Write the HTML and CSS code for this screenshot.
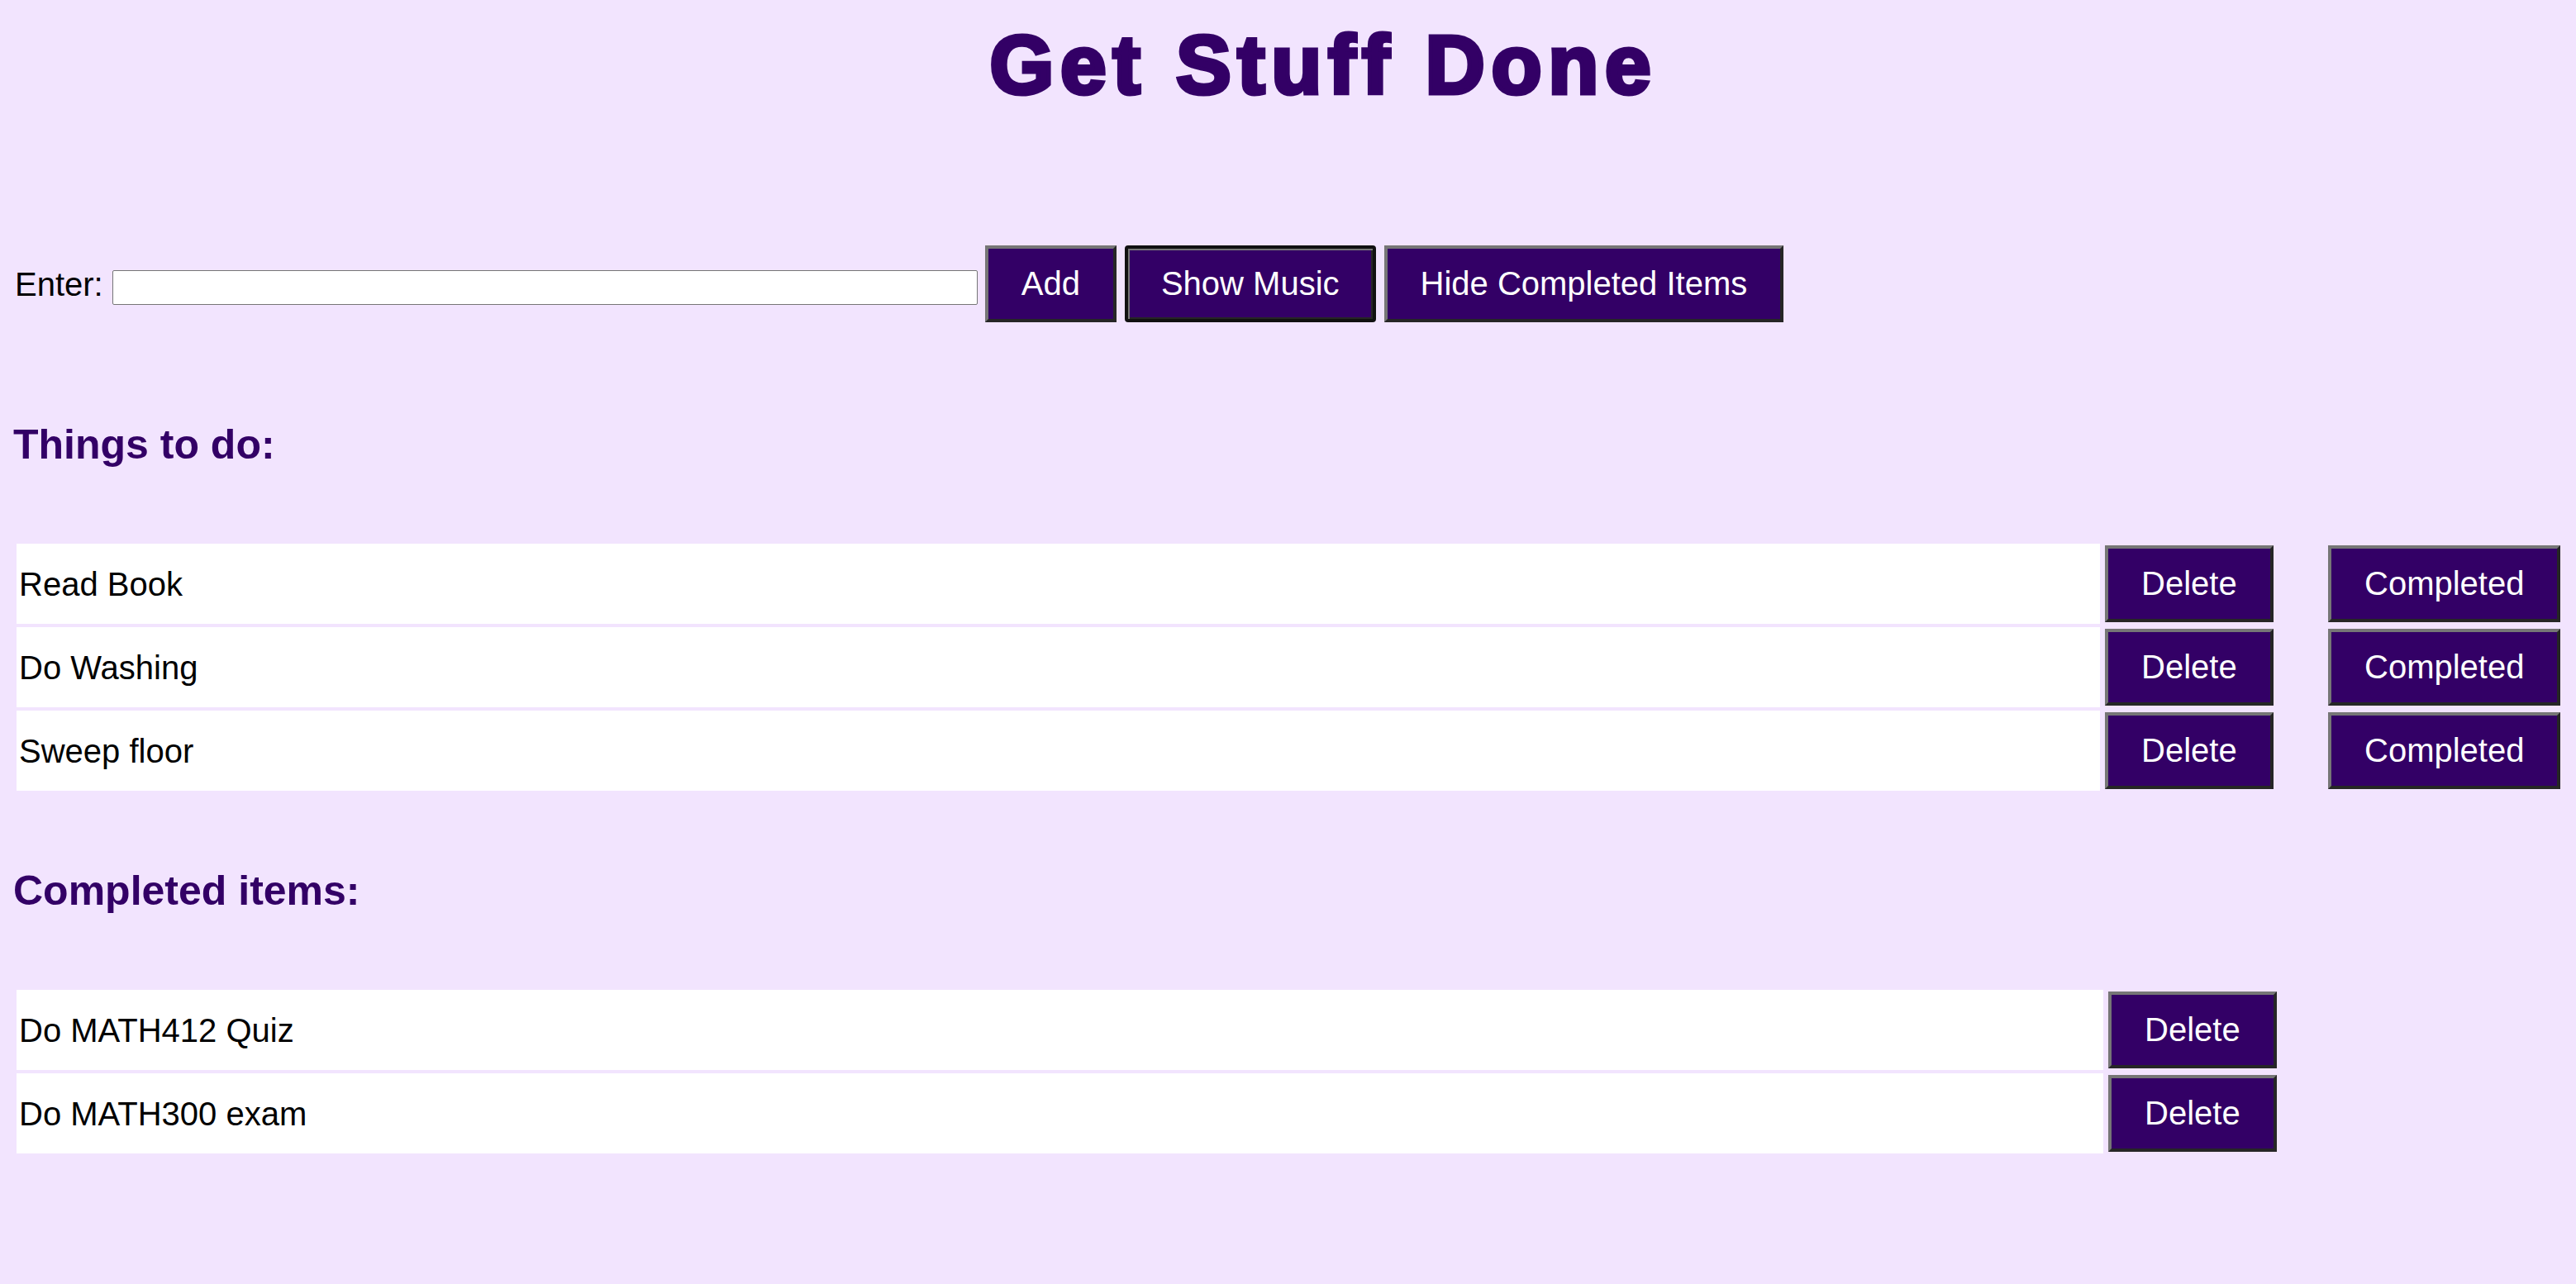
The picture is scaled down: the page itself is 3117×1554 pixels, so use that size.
FILE: index.html
```html
<!DOCTYPE html>
<html lang="en">
<head>
<meta charset="utf-8">
<title>Get Stuff Done</title>
<link rel="stylesheet" href="styles.css">
</head>
<body class="page">
  <header class="masthead">
    <h1 class="title">Get Stuff Done</h1>
  </header>

  <form class="entry-bar">
    <label class="entry-label" for="entry">Enter:</label>
    <input class="entry-input" id="entry" type="text">
    <button type="button" class="btn">Add</button>
    <button type="button" class="btn is-focused">Show Music</button>
    <button type="button" class="btn">Hide Completed Items</button>
  </form>

  <section class="list-section">
    <h2 class="section-title">Things to do:</h2>
    <table class="task-table task-table--todo">
      <tr>
        <td class="task-text">Read Book</td>
        <td class="task-action task-action--delete"><button type="button" class="btn">Delete</button></td>
        <td class="task-action task-action--complete"><button type="button" class="btn">Completed</button></td>
      </tr>
      <tr>
        <td class="task-text">Do Washing</td>
        <td class="task-action task-action--delete"><button type="button" class="btn">Delete</button></td>
        <td class="task-action task-action--complete"><button type="button" class="btn">Completed</button></td>
      </tr>
      <tr>
        <td class="task-text">Sweep floor</td>
        <td class="task-action task-action--delete"><button type="button" class="btn">Delete</button></td>
        <td class="task-action task-action--complete"><button type="button" class="btn">Completed</button></td>
      </tr>
    </table>
  </section>

  <section class="list-section">
    <h2 class="section-title">Completed items:</h2>
    <table class="task-table task-table--done">
      <tr>
        <td class="task-text">Do MATH412 Quiz</td>
        <td class="task-action task-action--done-delete"><button type="button" class="btn">Delete</button></td>
      </tr>
      <tr>
        <td class="task-text">Do MATH300 exam</td>
        <td class="task-action task-action--done-delete"><button type="button" class="btn">Delete</button></td>
      </tr>
    </table>
  </section>
</body>
</html>
```

FILE: styles.css
```css
html {
  background: #f2e4fe;
}

.page {
  margin: 0;
  padding: 0 16px;
  background: #f2e4fe;
  color: #000;
  font-family: "Liberation Sans", Arial, sans-serif;
  font-size: 40px;
}

.masthead {
  padding-left: 86px;
}

.title {
  margin: 28px 0 0;
  text-align: center;
  font-size: 100px;
  line-height: 100px;
  font-weight: 700;
  letter-spacing: 7.7px;
  color: #330066;
  -webkit-text-stroke: 5px #330066;
}

.entry-bar {
  display: flex;
  align-items: center;
  margin: 169px 0 120px;
}

.entry-label {
  line-height: 46px;
  margin: 0 11px 0 2px;
}

.entry-input {
  box-sizing: border-box;
  width: 1047px;
  height: 42px;
  margin: 9px 9px 0 0;
  padding: 0 4px;
  border: 1px solid #767676;
  border-radius: 2px;
  background: #fff;
  font-size: 26px;
}

.btn {
  margin: 0;
  padding: 20px 40px;
  border: 4px solid;
  border-color: #767676 #262626 #262626 #767676;
  background: #330066;
  color: #fff;
  font-family: "Liberation Sans", Arial, sans-serif;
  font-size: 40px;
  line-height: 45px;
  cursor: pointer;
}

.entry-bar .btn + .btn {
  margin-left: 10px;
}

.btn.is-focused {
  border-color: #111;
  border-radius: 4px;
  box-shadow: inset 2px 2px 0 #767676, inset -2px -2px 0 #262626;
}

.list-section + .list-section {
  margin-top: 89px;
}

.section-title {
  margin: 0 0 88px;
  font-size: 50px;
  line-height: 56px;
  font-weight: 700;
  color: #330066;
}

.task-table {
  border-collapse: separate;
  border-spacing: 4px;
}

.task-table--todo {
  table-layout: fixed;
  width: 3088px;
}

.task-table td {
  padding: 2px;
  vertical-align: middle;
}

.task-text {
  width: 2516px;
  padding-left: 3px !important;
  background: #fff;
  line-height: 46px;
}

.task-table--done .task-text {
  width: 2520px;
}

.task-action .btn {
  display: block;
}

.task-action--delete {
  width: 262px;
}

.task-action--complete {
  width: 281px;
}

.task-action--done-delete {
  width: 204px;
}
```
